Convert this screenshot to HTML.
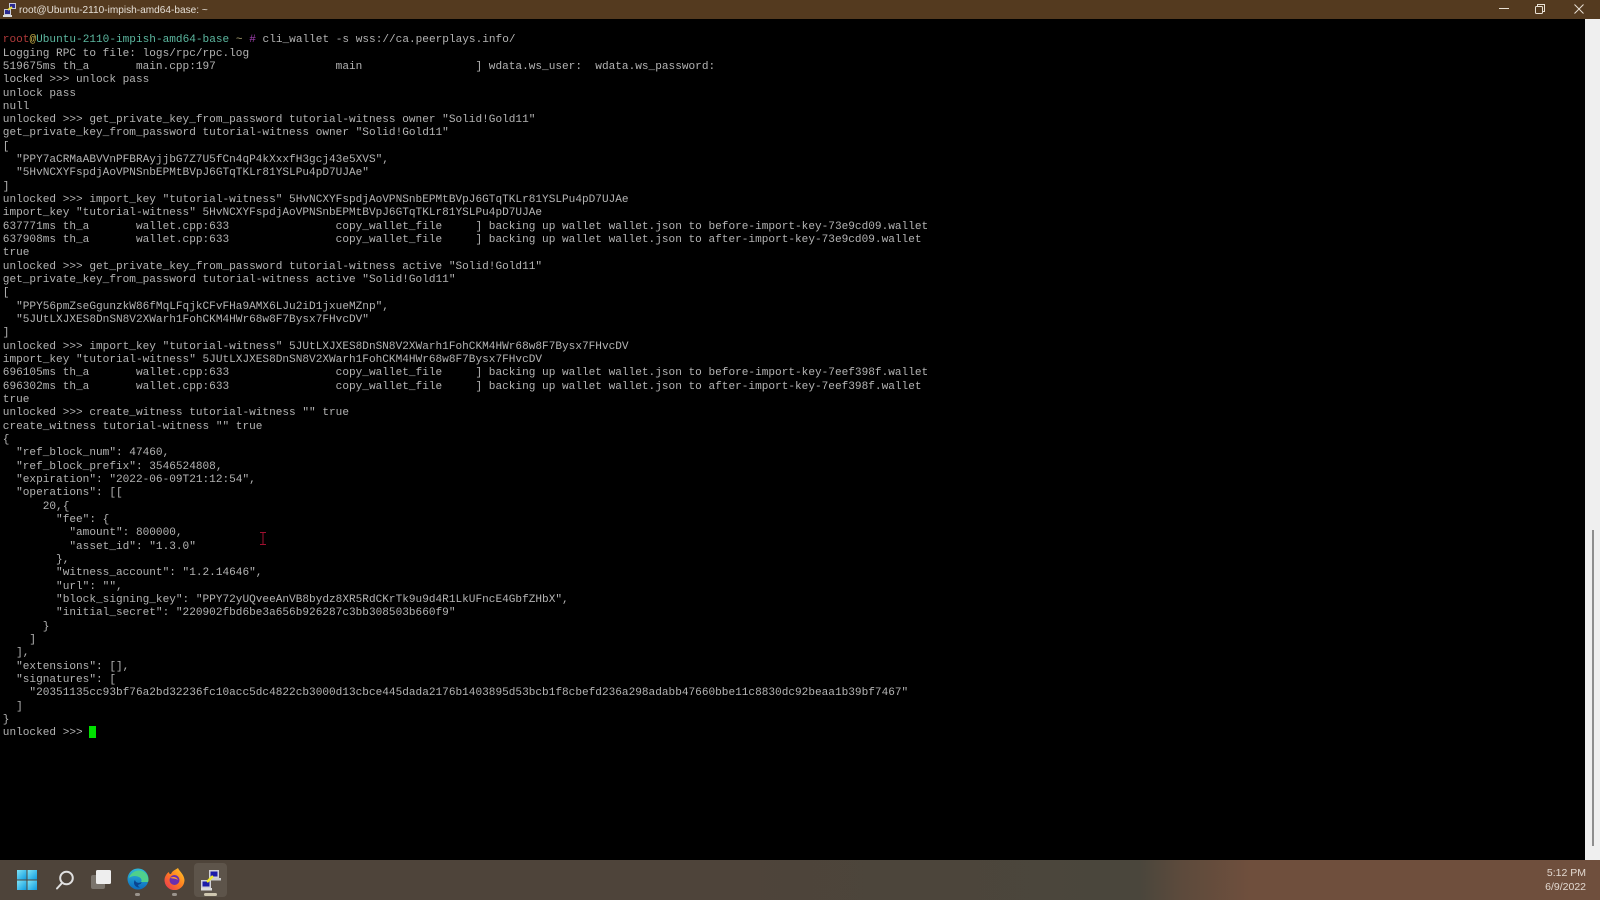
<!DOCTYPE html>
<html><head><meta charset="utf-8"><title>root@Ubuntu-2110-impish-amd64-base: ~</title>
<style>
html,body{margin:0;padding:0;width:1600px;height:900px;overflow:hidden;background:#000}
.a{position:absolute}
#title{left:0;top:0;width:1600px;height:19px;background:#543a1f}
#ttext{left:19px;top:3.5px;font:10.1px/13px "Liberation Sans",sans-serif;color:#e6e0d8;white-space:pre}
#term{left:2.8px;top:34.2px;margin:0;font:11.1px/13.33px "Liberation Mono",monospace;color:#b4b4b4;white-space:pre;filter:blur(.35px)}
#sb{left:1585px;top:19px;width:15px;height:841px;background:#efefef}
#thumb{left:1592px;top:530px;width:2px;height:316px;background:#8e8e8e}
#task{left:0;top:860px;width:1600px;height:40px;background:linear-gradient(90deg,#4e443a 0,#4e443a 700px,#4a463c 1140px,#5c4a3c 1180px,#6f4f3d 1250px,#6f4f3d 1600px)}
#clock{right:14px;top:867px;text-align:right;font:10.5px/13.5px "Liberation Sans",sans-serif;color:#e2d8d0}
</style></head><body>
<div class="a" id="title"></div>
<svg class="a" style="left:3px;top:2px" width="14" height="15" viewBox="0 0 14 15">
<rect x="6" y="1" width="7" height="6" fill="#c8c8d8"/><rect x="7" y="2" width="5" height="4" fill="#2a2a90"/>
<rect x="1" y="7" width="7" height="6" fill="#c8c8d8"/><rect x="2" y="8" width="5" height="4" fill="#2a2a90"/>
<path d="M5 8L9 5" stroke="#e8e040" stroke-width="2"/><rect x="0" y="13" width="9" height="2" fill="#ddd"/>
</svg>
<div class="a" id="ttext">root@Ubuntu-2110-impish-amd64-base: ~</div>
<svg class="a" style="left:1495px;top:1px" width="95" height="14" viewBox="0 0 95 14" fill="none" stroke="#e8e0d4">
<path d="M4 7.5H14" stroke-width="1"/>
<rect x="40.5" y="5.5" width="7" height="7" rx="1"/><path d="M42.5 5V3.5H49.5V10.5H48"/>
<path d="M79.5 3.5L88.5 12.5M88.5 3.5L79.5 12.5"/>
</svg>
<pre class="a" id="term"><span style="color:#b03a3a">root</span><span style="color:#c8b048">@</span><span style="color:#5cb8a0">Ubuntu-2110-impish-amd64-base</span> <span style="color:#a8a070">~</span> <span style="color:#a040b0">#</span> cli_wallet -s wss://ca.peerplays.info/
Logging RPC to file: logs/rpc/rpc.log
519675ms th_a       main.cpp:197                  main                 ] wdata.ws_user:  wdata.ws_password:
locked &gt;&gt;&gt; unlock pass
unlock pass
null
unlocked &gt;&gt;&gt; get_private_key_from_password tutorial-witness owner "Solid!Gold11"
get_private_key_from_password tutorial-witness owner "Solid!Gold11"
[
  "PPY7aCRMaABVVnPFBRAyjjbG7Z7U5fCn4qP4kXxxfH3gcj43e5XVS",
  "5HvNCXYFspdjAoVPNSnbEPMtBVpJ6GTqTKLr81YSLPu4pD7UJAe"
]
unlocked &gt;&gt;&gt; import_key "tutorial-witness" 5HvNCXYFspdjAoVPNSnbEPMtBVpJ6GTqTKLr81YSLPu4pD7UJAe
import_key "tutorial-witness" 5HvNCXYFspdjAoVPNSnbEPMtBVpJ6GTqTKLr81YSLPu4pD7UJAe
637771ms th_a       wallet.cpp:633                copy_wallet_file     ] backing up wallet wallet.json to before-import-key-73e9cd09.wallet
637908ms th_a       wallet.cpp:633                copy_wallet_file     ] backing up wallet wallet.json to after-import-key-73e9cd09.wallet
true
unlocked &gt;&gt;&gt; get_private_key_from_password tutorial-witness active "Solid!Gold11"
get_private_key_from_password tutorial-witness active "Solid!Gold11"
[
  "PPY56pmZseGgunzkW86fMqLFqjkCFvFHa9AMX6LJu2iD1jxueMZnp",
  "5JUtLXJXES8DnSN8V2XWarh1FohCKM4HWr68w8F7Bysx7FHvcDV"
]
unlocked &gt;&gt;&gt; import_key "tutorial-witness" 5JUtLXJXES8DnSN8V2XWarh1FohCKM4HWr68w8F7Bysx7FHvcDV
import_key "tutorial-witness" 5JUtLXJXES8DnSN8V2XWarh1FohCKM4HWr68w8F7Bysx7FHvcDV
696105ms th_a       wallet.cpp:633                copy_wallet_file     ] backing up wallet wallet.json to before-import-key-7eef398f.wallet
696302ms th_a       wallet.cpp:633                copy_wallet_file     ] backing up wallet wallet.json to after-import-key-7eef398f.wallet
true
unlocked &gt;&gt;&gt; create_witness tutorial-witness "" true
create_witness tutorial-witness "" true
{
  "ref_block_num": 47460,
  "ref_block_prefix": 3546524808,
  "expiration": "2022-06-09T21:12:54",
  "operations": [[
      20,{
        "fee": {
          "amount": 800000,
          "asset_id": "1.3.0"
        },
        "witness_account": "1.2.14646",
        "url": "",
        "block_signing_key": "PPY72yUQveeAnVB8bydz8XR5RdCKrTk9u9d4R1LkUFncE4GbfZHbX",
        "initial_secret": "220902fbd6be3a656b926287c3bb308503b660f9"
      }
    ]
  ],
  "extensions": [],
  "signatures": [
    "20351135cc93bf76a2bd32236fc10acc5dc4822cb3000d13cbce445dada2176b1403895d53bcb1f8cbefd236a298adabb47660bbe11c8830dc92beaa1b39bf7467"
  ]
}
unlocked &gt;&gt;&gt; </pre>
<div class="a" style="left:89px;top:726px;width:7px;height:12px;background:#00e000"></div>
<svg class="a" style="left:258px;top:531px" width="10" height="15" viewBox="0 0 10 15" fill="none" stroke="#a01030"><path d="M2 1.5H8M5 1.5V13.5M2 13.5H8"/></svg>
<div class="a" id="sb"></div>
<div class="a" id="thumb"></div>
<div class="a" id="task"></div>
<div class="a" style="left:194px;top:863px;width:33px;height:34px;border-radius:4px;background:#5d544a"></div>
<!-- Start -->
<svg class="a" style="left:17px;top:870px" width="20" height="20" viewBox="0 0 20 20">
<defs><linearGradient id="w" x1="0" y1="0" x2="1" y2="1"><stop offset="0" stop-color="#7fe3f5"/><stop offset="1" stop-color="#0f9ce0"/></linearGradient></defs>
<rect width="9.5" height="9.5" fill="url(#w)"/><rect x="10.5" width="9.5" height="9.5" fill="url(#w)"/><rect y="10.5" width="9.5" height="9.5" fill="url(#w)"/><rect x="10.5" y="10.5" width="9.5" height="9.5" fill="url(#w)"/>
</svg>
<!-- Search -->
<svg class="a" style="left:55px;top:870px" width="20" height="20" viewBox="0 0 20 20" fill="none" stroke="#e0e0e0" stroke-width="2"><circle cx="11.5" cy="8" r="6.3"/><path d="M7 13L2 18.5" stroke-linecap="round"/></svg>
<!-- Task view -->
<svg class="a" style="left:91px;top:870px" width="21" height="19" viewBox="0 0 21 19">
<rect x="0" y="5" width="14" height="14" rx="2" fill="#7a746c"/><rect x="5" y="0" width="15" height="14" rx="1.5" fill="#eeeeee"/>
</svg>
<!-- Edge -->
<svg class="a" style="left:127px;top:868px" width="22" height="22" viewBox="0 0 22 22">
<defs><linearGradient id="e" x1="0" y1="0" x2="0" y2="1"><stop offset="0" stop-color="#2fb8d8"/><stop offset="1" stop-color="#0c6cc0"/></linearGradient></defs>
<circle cx="11" cy="11" r="10.5" fill="url(#e)"/>
<path d="M21.5 12.5C21.5 6 17 2.5 12 2.5C7 2.5 3 6 2 10C5 7.5 9 7.5 12 9C15 10.5 15 13 14 14H21Z" fill="#4fd08c"/>
<path d="M14.5 14C12 15.5 8.5 15 8 12C5.5 15 8 20 13 19.5C11 18.5 10.5 17 12 16.5C13.5 16 14.5 15.5 14.5 14Z" fill="#0a4490"/>
</svg>
<!-- Firefox -->
<svg class="a" style="left:164px;top:868px" width="21" height="22" viewBox="0 0 21 22">
<defs><linearGradient id="f" x1="1" y1="0" x2="0" y2="1"><stop offset="0" stop-color="#ffd028"/><stop offset=".5" stop-color="#ff7a20"/><stop offset="1" stop-color="#e8305a"/></linearGradient></defs>
<path d="M14 0C15 3 20 6 20.5 12A10 10 0 1 1 1 9C2 7 3 5 5 4C5 6 6 6 7 6C8 3 11 2 14 0Z" fill="url(#f)"/>
<circle cx="10.5" cy="12" r="5" fill="#6a2fb0"/><path d="M6 10C9 8 13 9 14 12C12 10.5 9 10.5 6 10Z" fill="#ff9a30"/>
</svg>
<!-- PuTTY -->
<svg class="a" style="left:200px;top:869px" width="22" height="22" viewBox="0 0 22 22">
<rect x="9" y="1" width="10" height="8" fill="#d0d0d8"/><rect x="10.5" y="2.5" width="7" height="5" fill="#1c1ca8"/><rect x="11" y="9" width="10" height="2.5" fill="#ccc"/>
<rect x="1" y="11" width="10" height="8" fill="#d0d0d8"/><rect x="2.5" y="12.5" width="7" height="5" fill="#1c1ca8"/><rect x="1" y="19" width="11" height="2.5" fill="#ddd"/>
<path d="M7 13L13 7" stroke="#efe830" stroke-width="2.5"/>
</svg>
<div class="a" style="left:135px;top:893px;width:5px;height:3px;border-radius:2px;background:#9a948c"></div>
<div class="a" style="left:172px;top:893px;width:5px;height:3px;border-radius:2px;background:#9a948c"></div>
<div class="a" style="left:204px;top:893px;width:13px;height:3px;border-radius:2px;background:#cfc7b0"></div>
<div class="a" id="clock">5:12 PM<br>6/9/2022</div>
</body></html>
